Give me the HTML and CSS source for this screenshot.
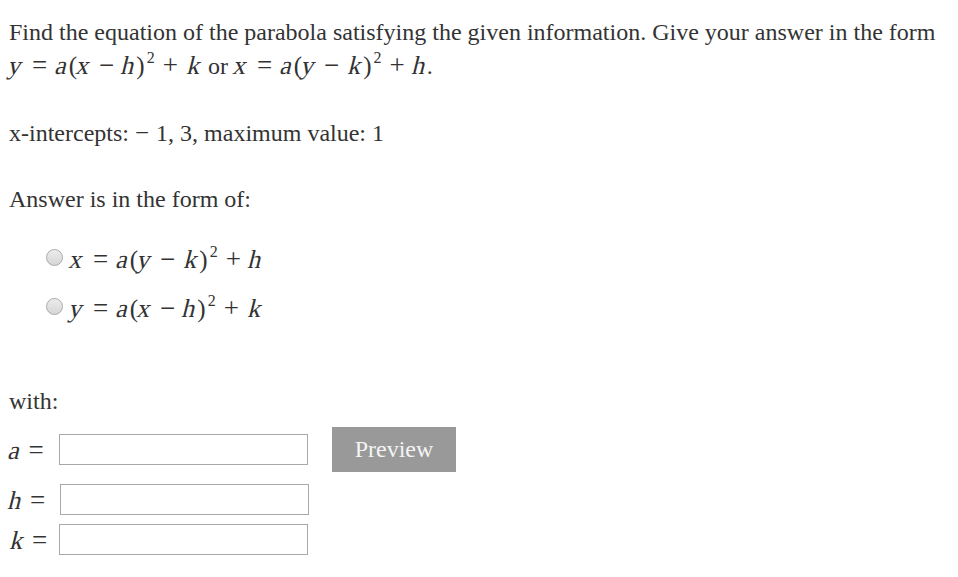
FILE: index.html
```html
<!DOCTYPE html>
<html>
<head>
<meta charset="utf-8">
<link rel="stylesheet" href="styles.css">
</head>
<body>
<div class="page">
  <p class="intro">Find the equation of the parabola satisfying the given information. Give your answer in the form<br>
  <span class="m"><i>y</i><span class="rel">=</span><i>a</i>(<i>x</i><span class="bin">&minus;</span><i>h</i>)<sup>2</sup><span class="bin">+</span><i class="k">k</i></span> or <span class="m"><i>x</i><span class="rel">=</span><i>a</i>(<i>y</i><span class="bin">&minus;</span><i class="k">k</i>)<sup>2</sup><span class="bin">+</span><i>h</i></span>.</p>
  <p class="given">x-intercepts: <span class="m up"><span class="bin first">&minus;</span>1, 3,</span> maximum value: <span class="m up">1</span></p>
  <p class="form-label">Answer is in the form of:</p>
  <div class="options">
    <label class="opt"><span class="radio"></span><span class="m"><i>x</i><span class="rel">=</span><i>a</i>(<i>y</i><span class="bin">&minus;</span><i class="k">k</i>)<sup>2</sup><span class="bin">+</span><i>h</i></span></label>
    <label class="opt"><span class="radio"></span><span class="m"><i>y</i><span class="rel">=</span><i>a</i>(<i>x</i><span class="bin">&minus;</span><i>h</i>)<sup>2</sup><span class="bin">+</span><i class="k">k</i></span></label>
  </div>
  <p class="with">with:</p>
  <div class="fields">
    <div class="row row-a"><span class="m var"><i>a</i><span class="rel">=</span></span><span class="box"></span><button class="preview">Preview</button></div>
    <div class="row row-h"><span class="m var"><i>h</i><span class="rel">=</span></span><span class="box"></span></div>
    <div class="row row-k"><span class="m var"><i class="k">k</i><span class="rel">=</span></span><span class="box"></span></div>
  </div>
</div>
</body>
</html>
```
FILE: styles.css
```css
html, body { margin: 0; padding: 0; background: #fff; }
body {
  font-family: "Liberation Serif", "Times New Roman", serif;
  font-size: 24px;
  color: #333;
}
.page { padding: 0 0 0 9px; }
p { margin: 0; line-height: 32px; }
.intro { padding-top: 15px; line-height: 34px; }
.m { font-family: "Liberation Serif", "Times New Roman", serif; font-size: 25px; line-height: 1; }
.m i {
  display: inline-block;
  font-style: normal;
  font-size: 26px;
  transform: skewX(-14deg);
  margin-right: 1px;
}
.m .k { margin-left: 2px; }
.m .rel { font-size: 27px; margin: 0 9px; }
.m .bin { font-size: 27px; margin: 0 8px; }
.m .bin.first { margin-left: 0; margin-right: 7px; font-size: 25px; }
.m.up { font-size: 24px; }
.m sup { font-size: 16px; vertical-align: baseline; position: relative; top: -11px; margin-left: 2px; }
.given { margin-top: 34px; }
.form-label { margin-top: 34px; }
.options { margin-top: 28px; padding-left: 37px; display: flex; flex-direction: column; gap: 17px; }
.opt { display: flex; align-items: flex-start; height: 32px; line-height: 32px; }
.opt .m { line-height: 32px; margin-left: 7px; }
.radio {
  flex: none;
  width: 15px; height: 15px; border-radius: 50%;
  margin-top: 6px;
  border: 1px solid #a9a9a9;
  background: linear-gradient(#ececec, #d6d6d6);
}
.with { margin-top: 61px; }
.fields { margin-top: 10px; display: flex; flex-direction: column; }
.row { display: flex; align-items: center; }
.var { width: 50px; line-height: 32px; position: relative; top: 1px; }
.var .rel { margin-left: 7px; }
.box { width: 247px; height: 29px; border: 1px solid #a9a9a9; background: #fff; }
.row-a { height: 45px; }
.row-h { margin-top: 11px; }
.row-h .box { margin-left: 1px; }
.row-k { margin-top: 7px; }
.preview {
  margin-left: 24px;
  width: 124px; height: 45px;
  background: #999; color: #f4f4f4; border: none;
  font-family: "Liberation Serif", "Times New Roman", serif; font-size: 24px;
  padding: 0;
}
```
